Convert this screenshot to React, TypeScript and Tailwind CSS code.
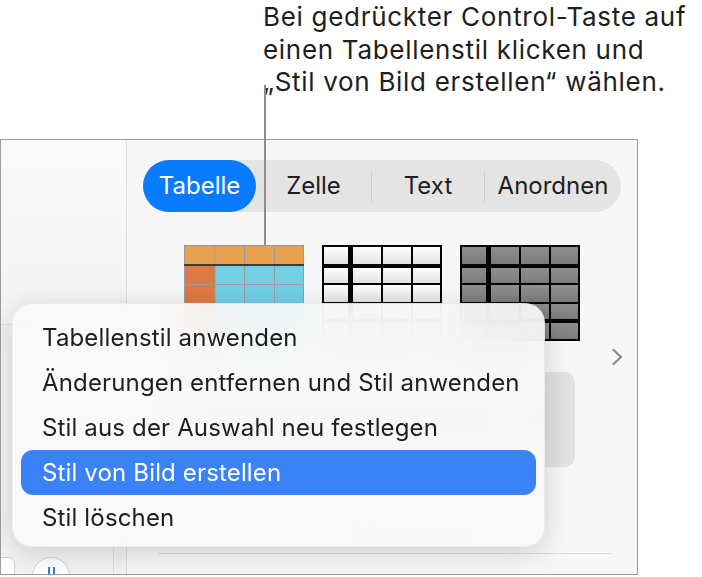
import React from 'react';

const ink = 'text-[#1e1e1e]';

// Tabellen-Vorschau: orange Kopfzeile, cyanfarbener Körper
const OrangeThumb = () => (
  <svg width="120" height="96" viewBox="0 0 120 96">
    <rect x="0" y="0" width="120" height="19" fill="#e8a24f" />
    <rect x="0" y="21" width="31" height="75" fill="#de7944" />
    <rect x="31" y="21" width="89" height="75" fill="#73cfe4" />
    <g stroke="#9b9b9b" strokeWidth="1">
      <line x1="31" y1="0" x2="31" y2="96" />
      <line x1="60.5" y1="0" x2="60.5" y2="96" />
      <line x1="90.5" y1="0" x2="90.5" y2="96" />
      <line x1="0" y1="39.5" x2="120" y2="39.5" />
      <line x1="0" y1="58.5" x2="120" y2="58.5" />
      <line x1="0" y1="77.5" x2="120" y2="77.5" />
      <rect x="0.5" y="0.5" width="119" height="95" fill="none" />
    </g>
    <rect x="0" y="19" width="120" height="2" fill="#3c3c3c" />
  </svg>
);

// Schwarzes Raster mit dicker Kopf- und erster Spaltenlinie
const GridThumb = ({ light }: { light?: boolean }) => {
  const id = light ? 'gw' : 'gg';
  const rows = [
    [2, 17],
    [23, 15],
    [40, 17],
    [59, 15],
    [78, 16],
  ];
  const cols = [
    [2, 24],
    [31, 28],
    [61, 28],
    [91, 27],
  ];
  return (
    <svg width="120" height="96" viewBox="0 0 120 96">
      <defs>
        <linearGradient id={id} x1="0" y1="0" x2="0" y2="1">
          <stop offset="0" stopColor={light ? '#ffffff' : '#8f8f8f'} />
          <stop offset="1" stopColor={light ? '#e2e2e2' : '#7b7b7b'} />
        </linearGradient>
      </defs>
      <rect x="0" y="0" width="120" height="96" fill="#050505" />
      {rows.map(([y, h], r) =>
        cols.map(([x, w], c) => <rect key={`${r}-${c}`} x={x} y={y} width={w} height={h} fill={`url(#${id})`} />)
      )}
    </svg>
  );
};

const Chevron = () => (
  <svg width="13" height="18" viewBox="0 0 13 18" fill="none">
    <polyline points="2.5,2 10,9 2.5,16" stroke="#8a8a8a" strokeWidth="2.2" strokeLinecap="round" strokeLinejoin="round" />
  </svg>
);

const tabs = ['Zelle', 'Text', 'Anordnen'];

const menuItems = [
  'Tabellenstil anwenden',
  'Änderungen entfernen und Stil anwenden',
  'Stil aus der Auswahl neu festlegen',
  'Stil von Bild erstellen',
  'Stil löschen',
];

export default function App() {
  return (
    <div className="relative w-[702px] h-[577px] overflow-hidden bg-white font-['Inter','Noto_Sans',sans-serif]">
      {/* Beschriftung */}
      <div className={`h-[139px] pl-[263px] pt-[1px] text-[26px] leading-[32.5px] tracking-[0.7px] ${ink}`}>
        <p>
          Bei gedrückter Control-Taste auf
          <br />
          einen Tabellenstil klicken und
          <br />
          „Stil von Bild erstellen“ wählen.
        </p>
      </div>

      {/* Bildschirmausschnitt */}
      <div className="flex w-[638px] h-[436px] overflow-hidden border border-[#9c9c9c] bg-[#f7f7f7]">
        <aside className="flex flex-col w-[126px] shrink-0 border-r border-[#dcdcdc] bg-[#f3f3f3]">
          <div className="h-[185px] border-b border-[#e0e0e0] bg-gradient-to-b from-[#fafafa] to-[#f3f3f3]" />
          <div className="flex-1" />
          <div className="relative flex h-[27px] items-start">
            <div className="mt-[10px] -ml-[6px] w-[20px] h-[30px] rounded-md border border-[#cfcfcf] bg-white" />
            <div className="mt-[10px] ml-[17px] flex w-[38px] h-[38px] justify-center rounded-full border border-[#cfcfcf] bg-white pt-[9px]">
              <div className="flex gap-[3px]">
                <span className="w-[2px] h-[8px] bg-[#2f7bf6]" />
                <span className="w-[2px] h-[8px] bg-[#2f7bf6]" />
              </div>
            </div>
            <div className="ml-auto mr-[12px] w-px h-full bg-[#dedede]" />
          </div>
        </aside>

        <main className="flex-1 flex flex-col pl-[16px] pt-[20px]">
          {/* Segmentsteuerung */}
          <div className={`flex items-center w-[478px] h-[52px] rounded-full bg-[#e4e4e4] text-[24px] ${ink}`}>
            <div className="flex items-center justify-center w-[113px] h-full rounded-full bg-[#0a7bff] text-white">
              Tabelle
            </div>
            {tabs.map((t, i) => (
              <div
                key={t}
                className={`flex items-center justify-center h-[33px] ${
                  i === 0 ? 'w-[115px]' : i === 1 ? 'w-[113px] border-l border-[#cfcfcf]' : 'flex-1 border-l border-[#cfcfcf]'
                }`}
              >
                {t}
              </div>
            ))}
          </div>

          {/* Tabellenstile */}
          <div className="flex gap-[18px] mt-[33px] pl-[41px]">
            <OrangeThumb />
            <GridThumb light />
            <GridThumb />
          </div>

          <div className="flex justify-end h-[24px] mt-[4px] pr-[13px] items-center">
            <Chevron />
          </div>

          <div className="ml-[15px] mr-[62px] mt-[3px] h-[95px] rounded-[10px] bg-[#e1e1e1]" />

          {/* verdeckter Inhalt unter dem Menü */}
          <div className="mt-[30px] flex gap-[40px] pl-[40px] text-[15px] text-[#b4b4b4]">
            <span>Titel und Legende</span>
            <div className="flex flex-col gap-[2px]">
              <span>Tabelle ordnen</span>
              <span>Zellen anpassen</span>
            </div>
          </div>

          <div className="mt-auto mb-[20px] ml-[15px] mr-[26px] h-px bg-[#dcdcdc]" />
        </main>
      </div>

      {/* Hinweislinie */}
      <div className="absolute left-[264px] top-[85px] w-[2px] h-[160px] bg-[#8d8d8d]" />

      {/* Kontextmenü */}
      <div className="absolute left-[12px] top-[303px] w-[533px] h-[244px] rounded-[20px] border border-black/5 bg-[#f9f9f9]/90 backdrop-blur-xl shadow-[0_6px_28px_rgba(0,0,0,0.16)] px-[8px] pt-[11px]">
        {menuItems.map((item, i) => (
          <div
            key={item}
            className={`flex items-center h-[45px] rounded-[12px] pl-[21px] text-[24px] tracking-[0.15px] ${
              i === 3 ? 'bg-[#3c82f7] text-white' : ink
            }`}
          >
            {item}
          </div>
        ))}
      </div>
    </div>
  );
}
